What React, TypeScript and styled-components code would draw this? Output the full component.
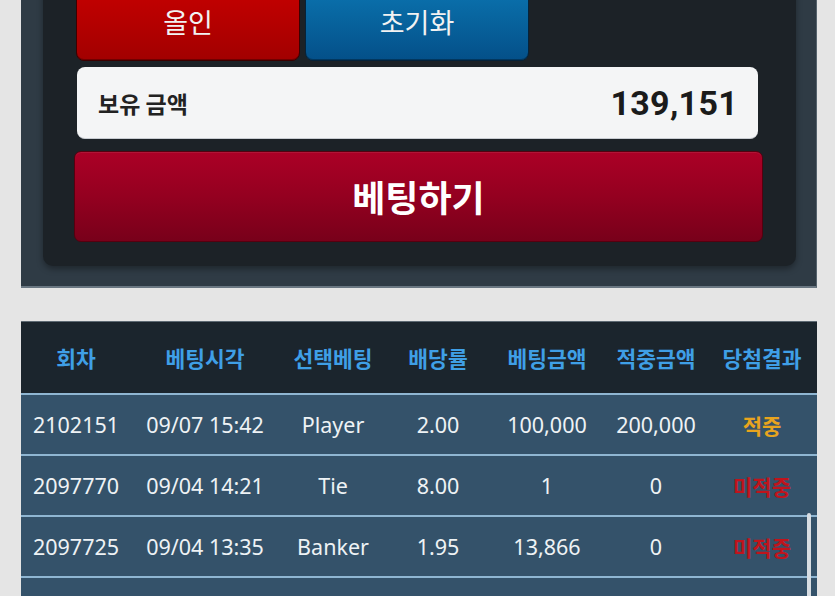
import styled, { createGlobalStyle } from 'styled-components';

const GlobalStyle = createGlobalStyle`
  html, body {
    margin: 0;
    padding: 0;
    background: #e5e5e5;
    overflow: hidden;
  }
  body {
    font-family: 'Noto Sans', 'Noto Sans CJK KR', sans-serif;
  }
`;

const kr = `'Noto Sans CJK KR', 'Noto Sans', sans-serif`;

type Result = 'win' | 'lose';

const history: {
  round: string;
  time: string;
  pick: string;
  odds: string;
  bet: string;
  payout: string;
  result: Result;
}[] = [
  { round: '2102151', time: '09/07 15:42', pick: 'Player', odds: '2.00', bet: '100,000', payout: '200,000', result: 'win' },
  { round: '2097770', time: '09/04 14:21', pick: 'Tie', odds: '8.00', bet: '1', payout: '0', result: 'lose' },
  { round: '2097725', time: '09/04 13:35', pick: 'Banker', odds: '1.95', bet: '13,866', payout: '0', result: 'lose' },
  { round: '2097701', time: '09/04 13:10', pick: 'Player', odds: '2.00', bet: '5,000', payout: '0', result: 'lose' },
];

const columns = [
  { label: '회차', width: 110 },
  { label: '베팅시각', width: 148 },
  { label: '선택베팅', width: 108 },
  { label: '배당률', width: 102 },
  { label: '베팅금액', width: 116 },
  { label: '적중금액', width: 102 },
  { label: '당첨결과', width: 110 },
];

export default function App() {
  return (
    <>
      <GlobalStyle />
      <Page>
        <Panel>
          <Card>
            <QuickRow>
              <QuickButton tone="red">올인</QuickButton>
              <QuickButton tone="blue">초기화</QuickButton>
            </QuickRow>
            <Balance>
              <BalanceLabel>보유 금액</BalanceLabel>
              <BalanceValue>139,151</BalanceValue>
            </Balance>
            <BetButton>베팅하기</BetButton>
          </Card>
        </Panel>

        <TableWrap>
          <Table>
            <colgroup>
              {columns.map(c => (
                <col key={c.label} style={{ width: c.width }} />
              ))}
            </colgroup>
            <thead>
              <tr>
                {columns.map(c => (
                  <Th key={c.label}>{c.label}</Th>
                ))}
              </tr>
            </thead>
            <tbody>
              {history.map(row => (
                <Tr key={row.round}>
                  <Td>{row.round}</Td>
                  <Td>{row.time}</Td>
                  <Td>{row.pick}</Td>
                  <Td>{row.odds}</Td>
                  <Td>{row.bet}</Td>
                  <Td>{row.payout}</Td>
                  <ResultCell result={row.result}>
                    {row.result === 'win' ? '적중' : '미적중'}
                  </ResultCell>
                </Tr>
              ))}
            </tbody>
          </Table>
          <ScrollThumb />
        </TableWrap>
      </Page>
    </>
  );
}

const Page = styled.div`
  padding: 0 18px 0 21px;
  display: flex;
  flex-direction: column;
  gap: 33px;
`;

const Panel = styled.section`
  margin-top: -60px;
  background: #2f3b45;
  padding: 0 20px 20px 22px;
  border-bottom: 2px solid #6a7782;
  border-right: 1px solid #56636d;
`;

const Card = styled.div`
  background: #1c2227;
  border-radius: 0 0 10px 10px;
  padding: 41px 33px 24px 31px;
  box-shadow: 0 3px 6px rgba(0, 0, 0, 0.35);
  display: flex;
  flex-direction: column;
`;

const QuickRow = styled.div`
  display: flex;
  gap: 5px;
  margin-left: 2px;
`;

const QuickButton = styled.button<{ tone: 'red' | 'blue' }>`
  width: 224px;
  height: 80px;
  padding: 0;
  border-radius: 8px;
  border: 1px solid ${p => (p.tone === 'red' ? '#3d0000' : '#06233a')};
  background: ${p =>
    p.tone === 'red'
      ? 'linear-gradient(180deg, #c80000 0%, #a20000 100%)'
      : 'linear-gradient(180deg, #0b76b2 0%, #045089 100%)'};
  color: #f2f2f2;
  font-family: ${kr};
  font-size: 27px;
  font-weight: 400;
  box-shadow: inset 0 -1px 0 rgba(0, 0, 0, 0.3);
`;

const Balance = styled.div`
  margin: 6px 5px 0 3px;
  height: 72px;
  box-sizing: border-box;
  background: #f4f5f6;
  border-radius: 8px;
  border-bottom: 1px solid #c8ccd2;
  padding: 0 20px 0 21px;
  display: flex;
  align-items: center;
  justify-content: space-between;
`;

const BalanceLabel = styled.span`
  font-family: ${kr};
  font-size: 23px;
  font-weight: 700;
  color: #222;
`;

const BalanceValue = styled.span`
  font-family: Roboto, 'Noto Sans', sans-serif;
  font-size: 34px;
  font-weight: 700;
  color: #1b1b1b;
  letter-spacing: 0.3px;
`;

const BetButton = styled.button`
  margin-top: 12px;
  height: 91px;
  border-radius: 7px;
  border: 1px solid #55000f;
  background: linear-gradient(180deg, #ab0026 0%, #940020 50%, #78001a 100%);
  color: #fff;
  font-family: ${kr};
  font-size: 36px;
  font-weight: 700;
  padding: 0 0 2px;
  box-shadow: inset 0 1px 0 rgba(255, 255, 255, 0.08);
`;

const TableWrap = styled.div`
  position: relative;
  width: 796px;
`;

const Table = styled.table`
  width: 796px;
  table-layout: fixed;
  border-collapse: collapse;
  border-top: 1px solid #5e6a73;
`;

const Th = styled.th`
  height: 71px;
  padding: 0;
  background: #1b252d;
  color: #3f9fe6;
  font-family: ${kr};
  font-size: 21.5px;
  font-weight: 700;
  text-align: center;
  white-space: nowrap;
`;

const Tr = styled.tr`
  background: #34526a;
  border-top: 2px solid #8fb6d2;
`;

const Td = styled.td`
  height: 59px;
  padding: 0;
  text-align: center;
  color: #eef2f5;
  font-family: 'Noto Sans', 'Open Sans', sans-serif;
  font-size: 21.5px;
  white-space: nowrap;
`;

const ResultCell = styled(Td)<{ result: Result }>`
  font-family: ${kr};
  font-size: 21px;
  font-weight: 700;
  color: ${p => (p.result === 'win' ? '#e8a41e' : '#c0141c')};
`;

const ScrollThumb = styled.div`
  position: absolute;
  right: 6px;
  top: 192px;
  width: 4px;
  height: 120px;
  border-radius: 2px;
  background: #d8dde2;
`;
